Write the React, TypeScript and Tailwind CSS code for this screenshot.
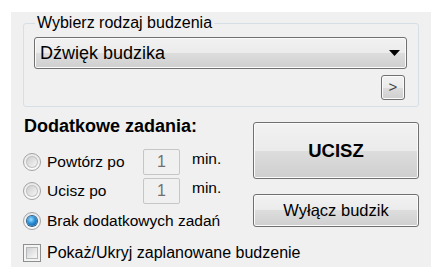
import React from "react";

const btnBg =
  "border border-[#707070] rounded-[3px] bg-[linear-gradient(to_bottom,#f2f2f2_0%,#ebebeb_50%,#dddddd_50%,#cfcfcf_100%)] shadow-[inset_0_0_0_1px_#fbfbfb]";

function Radio({ checked }: { checked?: boolean }) {
  return (
    <div className="w-[18px] h-[18px] rounded-full border border-[#a3a3a3] bg-[linear-gradient(to_bottom,#e8e8e8,#fbfbfb)] flex items-center justify-center shrink-0">
      {checked ? (
        <div className="w-[10px] h-[10px] rounded-full bg-[radial-gradient(circle_at_40%_35%,#9fe0ff_0%,#2a8fd8_45%,#0c4d86_100%)] shadow-[0_0_0_1px_#2d5f8a]" />
      ) : (
        <div className="w-[12px] h-[12px] rounded-full bg-[linear-gradient(135deg,#c9c9c9,#ececec_70%,#f6f6f6)] shadow-[inset_0_0_0_1px_#c2c2c2]" />
      )}
    </div>
  );
}

function NumberBox() {
  return (
    <div className="w-[37px] h-[26px] rounded-[2px] border border-[#c6c6c6] bg-[#f0f0f0] flex items-center justify-center text-[16px] text-[#707070]">
      1
    </div>
  );
}

export default function App() {
  return (
    <div className="w-[441px] h-[279px] bg-white pt-[12px] pl-[11px] font-['Liberation_Sans',Arial,sans-serif] text-black">
      <div className="w-[420px] h-[255px] bg-[#f0f0f0] pt-[11px] pl-[12px]">
        {/* Group box */}
        <div className="relative w-[396px] h-[84px] rounded-[3px] border border-[#d5dfe5]">
          <span className="absolute -top-[10px] left-[11px] bg-[#f0f0f0] px-[2px] text-[16px] leading-[18px]">
            Wybierz rodzaj budzenia
          </span>
          <div
            className={`ml-[10px] mt-[13px] w-[373px] h-[32px] flex items-center justify-between pl-[5px] pr-[6px] ${btnBg}`}
          >
            <span className="text-[18px]">Dźwięk budzika</span>
            <svg width="11" height="6" viewBox="0 0 11 6">
              <polygon points="0,0 11,0 5.5,6" fill="#000" />
            </svg>
          </div>
          <div className="flex justify-end mr-[13px] mt-[6px]">
            <div
              className={`w-[24px] h-[25px] flex items-center justify-center text-[15px] text-[#444] ${btnBg}`}
            >
              &gt;
            </div>
          </div>
        </div>

        {/* Bottom section */}
        <div className="flex mt-[9px] -ml-[12px]">
          <div className="w-[242px] pl-[12px]">
            <div className="ml-[1px] text-[18px] leading-[20px] font-bold">
              Dodatkowe zadania:
            </div>
            <div className="mt-[12px] h-[28px] flex items-center">
              <Radio />
              <span className="ml-[6px] w-[96px] text-[15.5px]">Powtórz po</span>
              <NumberBox />
              <span className="ml-[12px] text-[15.5px] -mt-[6px]">min.</span>
            </div>
            <div className="h-[29px] flex items-center">
              <Radio />
              <span className="ml-[6px] w-[96px] text-[15.5px]">Ucisz po</span>
              <NumberBox />
              <span className="ml-[12px] text-[15.5px] -mt-[6px]">min.</span>
            </div>
            <div className="mt-[2px] h-[28px] flex items-center">
              <Radio checked />
              <span className="ml-[6px] text-[15.5px] whitespace-nowrap">
                Brak dodatkowych zadań
              </span>
            </div>
            <div className="mt-[4px] h-[28px] flex items-center">
              <div className="w-[18px] h-[18px] border border-[#8e8f8f] bg-[#f4f4f4] p-[2px] shrink-0">
                <div className="w-full h-full border border-[#b5b8bb] bg-[linear-gradient(135deg,#cfd0d2,#eeeeee_70%,#f7f7f7)]" />
              </div>
              <span className="ml-[6px] text-[16px] whitespace-nowrap">
                Pokaż/Ukryj zaplanowane budzenie
              </span>
            </div>
          </div>
          <div className="w-[166px] pt-[6px] flex flex-col">
            <div
              className={`h-[57px] flex items-center justify-center text-[18.5px] font-bold ${btnBg}`}
            >
              UCISZ
            </div>
            <div
              className={`mt-[15px] h-[33px] flex items-center justify-center text-[16.5px] ${btnBg}`}
            >
              Wyłącz budzik
            </div>
          </div>
        </div>
      </div>
    </div>
  );
}
